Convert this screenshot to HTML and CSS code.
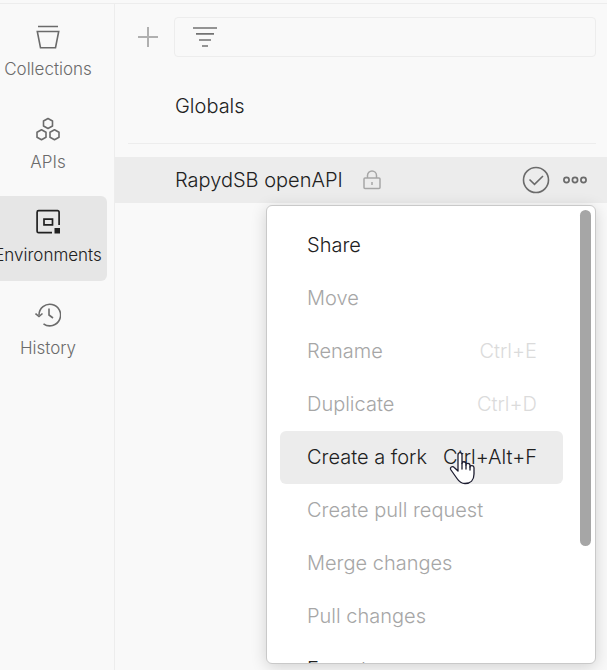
FILE: index.html
```html
<!DOCTYPE html>
<html lang="en">
<head>
    <meta charset="UTF-8">
    <meta name="viewport" content="width=device-width, initial-scale=1.0">
    <title>Environments</title>
    <link rel="stylesheet" href="styles.css">
</head>
<body>

    <div class="workspace">
        <nav class="sidebar">
            <a class="nav-item" href="#collections">
                <svg width="26" height="26" viewBox="0 0 26 26" fill="none" stroke="currentColor" stroke-width="1.6">
                    <path d="M3 3.5h20M2.3 8.5h21.4l-3.2 16.2h-15z"/>
                </svg>
                Collections
            </a>
            <a class="nav-item" href="#apis">
                <svg width="26" height="26" viewBox="0 0 26 26" fill="none" stroke="currentColor" stroke-width="1.6" stroke-linejoin="round">
                    <path d="M13 2.5l4.5 2.5v5L13 12.5l-4.5-2.5V5z"/>
                    <path d="M6.5 13.7l4.500 2.500v5l-4.500 2.500-4.500-2.500v-5z"/>
                    <path d="M19.500 13.700l4.500 2.500v5l-4.500 2.500-4.500-2.500v-5z"/>
                </svg>
                APIs
            </a>
            <a class="nav-item active" href="#environments">
                <svg width="26" height="26" viewBox="0 0 26 26" fill="none" stroke="currentColor" stroke-width="1.7">
                    <path d="M17 23.700H3.600a1.500 1.500 0 0 1-1.500-1.500V3.200a1.500 1.500 0 0 1 1.500-1.500h19a1.500 1.500 0 0 1 1.500 1.500V16"/>
                    <path d="M9 10.200h8.500v5.600H9z"/>
                    <path d="M19.500 19h5.500v5.500h-5.500z" fill="currentColor" stroke="none"/>
                </svg>
                Environments
            </a>
            <a class="nav-item" href="#history">
                <svg width="26" height="26" viewBox="0 0 26 26" fill="none" stroke="currentColor" stroke-width="1.6">
                    <path d="M4 13A10.800 10.800 0 1 1 8.500 21.800"/>
                    <path d="M.500 11.500l3.500 3 3.500-3M14 6.500v6.500l4 3"/>
                </svg>
                History
            </a>
        </nav>

        <main class="panel">
            <div class="toolbar">
                <button class="icon-button" type="button" aria-label="Create environment">
                    <svg width="20" height="20" viewBox="0 0 20 20" stroke="#b0b0b0" stroke-width="2">
                        <path d="M0 10h20M10 0v20"/>
                    </svg>
                </button>
                <label class="search">
                    <svg width="24" height="20" viewBox="0 0 24 20" stroke="#737373" stroke-width="1.7">
                        <path d="M0 1h24M3 6.900h18M6 13h12M9 19h6"/>
                    </svg>
                    <input type="text" aria-label="Filter environments">
                </label>
            </div>

            <a class="globals" href="#globals">Globals</a>

            <div class="environment">
                <a class="environment-name" href="#rapydsb">RapydSB openAPI</a>
                <svg class="lock" width="18" height="20" viewBox="0 0 18 20" fill="none" stroke="#a6a6a6" stroke-width="1.5">
                    <rect x="1" y="8" width="16" height="10.5" rx="1"/>
                    <path d="M4.500 8V5.500a4.500 4.500 0 0 1 9 0V8M9 12v3"/>
                </svg>
                <button class="icon-button" type="button" aria-label="Set active">
                    <svg width="28" height="28" viewBox="0 0 28 28" fill="none" stroke="#6b6b6b" stroke-width="1.6">
                        <circle cx="14" cy="14" r="12.5"/>
                        <path d="M7.500 13.500l5 4.800L21 10"/>
                    </svg>
                </button>
                <button class="icon-button" type="button" aria-label="More actions">
                    <svg width="24" height="8" viewBox="0 0 24 8" fill="none" stroke="#6b6b6b" stroke-width="1.7">
                        <circle cx="3.5" cy="4" r="2.6"/>
                        <circle cx="12" cy="4" r="2.6"/>
                        <circle cx="20.5" cy="4" r="2.6"/>
                    </svg>
                </button>

                <div class="menu">
                    <button class="menu-item" type="button">Share</button>
                    <button class="menu-item" type="button" disabled>Move</button>
                    <button class="menu-item" type="button" disabled>Rename <span class="shortcut">Ctrl+E</span></button>
                    <button class="menu-item" type="button" disabled>Duplicate <span class="shortcut">Ctrl+D</span></button>
                    <button class="menu-item highlighted" type="button">
                        Create a fork <span class="shortcut">Ctrl+Alt+F</span>
                        <svg class="pointer" width="26" height="34" viewBox="0 0 26 34" fill="#fff" stroke="#1c1c30" stroke-width="1.3" stroke-linejoin="round" stroke-linecap="round">
                            <path d="M9 20V4c0-3.200 4-3.200 4 0v8.500c0-2.500 4-2.300 4 .5v1c0-2.300 4-2.200 4 .5v1.500c.3-2 4-1.800 4 .8V23c0 6-3.500 9.500-9 9.500-4 0-6-2-8-5l-6-8.500c-1.800-3 1.500-4.300 3.500-2.300z"/>
                            <path d="M13 12.500V18M17 14v4M21 16v3" fill="none"/>
                        </svg>
                    </button>
                    <button class="menu-item" type="button" disabled>Create pull request</button>
                    <button class="menu-item" type="button" disabled>Merge changes</button>
                    <button class="menu-item" type="button" disabled>Pull changes</button>
                    <button class="menu-item" type="button">Export</button>
                    <span class="scroll-thumb"></span>
                </div>
            </div>
        </main>
    </div>

</body>
</html>
```
FILE: styles.css
```css
* {
    box-sizing: border-box;
}

body {
    margin: 0;
    padding-top: 3px;
    background-color: #f9f9f9;
    color: #212121;
    font-family: Inter, "Open Sans", sans-serif;
    font-size: 20px;
    font-weight: 300;
    line-height: 24px;
}

a {
    color: inherit;
    text-decoration: none;
}

button {
    padding: 0;
    border: none;
    background: none;
    color: inherit;
    font: inherit;
    text-align: left;
}

svg {
    display: block;
    flex-shrink: 0;
}

.workspace {
    display: flex;
    height: calc(100vh - 3px);
    border-top: 1px solid #ededed;
    overflow: hidden;
}

/* Left navigation */
.sidebar {
    display: flex;
    flex-direction: column;
    flex-shrink: 0;
    align-items: flex-end;
    gap: 8px;
    width: 115px;
    padding: 6px 7px 0 0;
    border-right: 1px solid #ededed;
    overflow: hidden;
}

.nav-item {
    display: flex;
    flex-direction: column;
    align-items: center;
    gap: 8px;
    width: 118px;
    height: 85px;
    padding-top: 13px;
    border-radius: 6px;
    color: #6b6b6b;
    font-size: 17px;
    line-height: 24px;
}

.nav-item.active {
    background-color: #e6e6e6;
    color: #212121;
}

/* Environment list */
.panel {
    flex: 1;
    min-width: 0;
}

.toolbar {
    display: flex;
    align-items: center;
    gap: 16px;
    padding: 13px 11px 0 23px;
}

.search {
    display: flex;
    flex: 1;
    align-items: center;
    gap: 12px;
    height: 40px;
    padding: 0 18px;
    border: 1px solid #ededed;
    border-radius: 4px;
}

.search input {
    flex: 1;
    min-width: 0;
    border: none;
    outline: none;
    background: none;
    font: inherit;
}

.globals {
    display: block;
    margin: 14px 11px 13px 13px;
    padding: 23px 0 25px 47px;
    border-bottom: 1px solid #ededed;
}

.environment {
    position: relative;
    display: flex;
    align-items: center;
    gap: 13px;
    height: 46px;
    padding: 0 20px 0 60px;
    background-color: #ececec;
}

.lock {
    margin: 0 auto 0 7px;
}

/* Actions menu */
.menu {
    position: absolute;
    top: 48px;
    right: 11px;
    width: 330px;
    height: calc(100vh - 211px);
    padding: 13px 32px 0 13px;
    border: 1px solid #c9c9c9;
    border-radius: 6px;
    background-color: #fff;
    box-shadow: 0 3px 16px rgba(0, 0, 0, 0.16);
    overflow: hidden;
}

.menu-item {
    position: relative;
    display: flex;
    align-items: center;
    justify-content: space-between;
    width: 100%;
    height: 53px;
    padding: 0 26px 2px 27px;
    border-radius: 6px;
    white-space: nowrap;
}

.menu-item:disabled {
    color: #a6a6a6;
}

.menu-item:disabled .shortcut {
    color: #dbdbdb;
}

.menu-item.highlighted {
    background-color: #ececec;
}

.pointer {
    position: absolute;
    top: 20px;
    right: 88px;
}

.scroll-thumb {
    position: absolute;
    top: 4px;
    right: 4px;
    width: 11px;
    height: 336px;
    border-radius: 6px;
    background-color: #a6a6a6;
}
```
